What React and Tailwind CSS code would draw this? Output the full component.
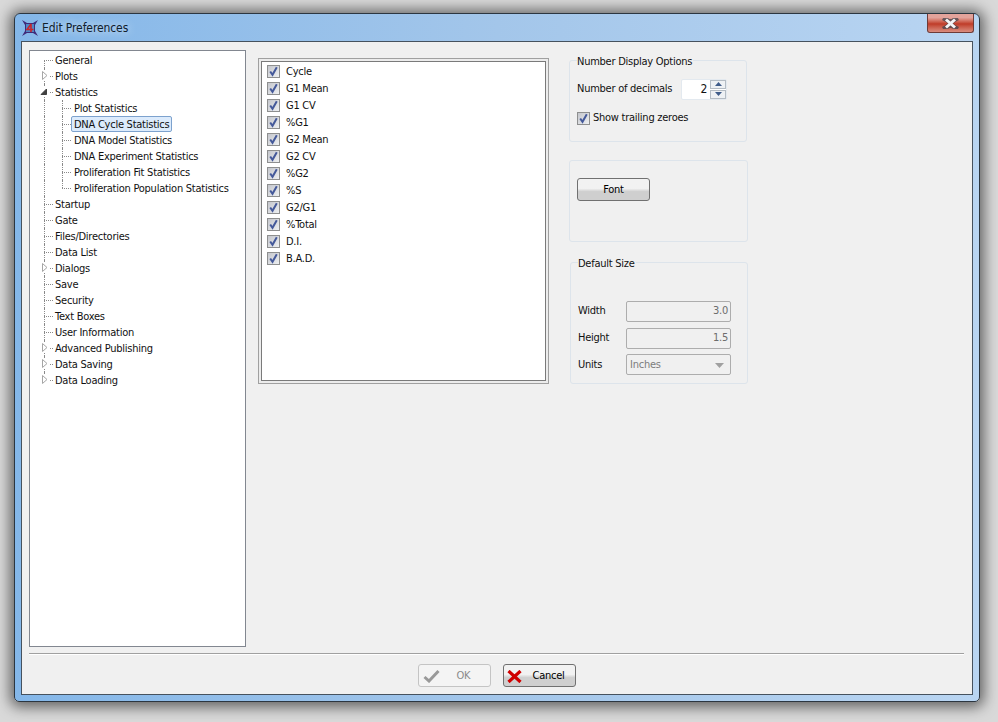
const font = "font-['DejaVu_Sans_Condensed','DejaVu_Sans','Liberation_Sans',sans-serif]"

const treeRows = [
  { label: 'General', first: true },
  { label: 'Plots', arrow: 'closed' },
  { label: 'Statistics', arrow: 'open' },
  { label: 'Plot Statistics', child: true },
  { label: 'DNA Cycle Statistics', child: true, selected: true },
  { label: 'DNA Model Statistics', child: true },
  { label: 'DNA Experiment Statistics', child: true },
  { label: 'Proliferation Fit Statistics', child: true },
  { label: 'Proliferation Population Statistics', child: true, lastChild: true },
  { label: 'Startup' },
  { label: 'Gate' },
  { label: 'Files/Directories' },
  { label: 'Data List' },
  { label: 'Dialogs', arrow: 'closed' },
  { label: 'Save' },
  { label: 'Security' },
  { label: 'Text Boxes' },
  { label: 'User Information' },
  { label: 'Advanced Publishing', arrow: 'closed' },
  { label: 'Data Saving', arrow: 'closed' },
  { label: 'Data Loading', arrow: 'closed', last: true },
]

const statItems = ['Cycle', 'G1 Mean', 'G1 CV', '%G1', 'G2 Mean', 'G2 CV', '%G2', '%S', 'G2/G1', '%Total', 'D.I.', 'B.A.D.']

function Arrow({ type }) {
  return (
    <svg className="absolute left-[-4px] top-[3px] bg-white" width="9" height="9" viewBox="0 0 9 9">
      {type === 'open' ? (
        <path d="M1 7.5 L6.5 7.5 L6.5 2 Z" fill="#404040" stroke="#404040" />
      ) : (
        <path d="M2.5 0.5 L7 4.5 L2.5 8.5 Z" fill="#fff" stroke="#a6a6a6" />
      )}
    </svg>
  )
}

function TreeRow({ row }) {
  const dots = 'border-[#8a8a8a] border-dotted'
  return (
    <div className="flex h-4 items-stretch whitespace-nowrap">
      <div className="relative ml-[14px] w-[9px] shrink-0">
        {!row.arrow && !row.child && (
          <div className={`absolute left-0 top-2 w-[9px] border-t ${dots}`} />
        )}
        {row.arrow && <div className={`absolute left-[6px] top-2 w-[3px] border-t ${dots}`} />}
        <div
          className={`absolute left-0 border-l ${dots} ${row.first ? 'top-2 bottom-0' : row.last ? 'top-0 h-2' : 'inset-y-0'}`}
        />
        {row.arrow && <Arrow type={row.arrow} />}
      </div>
      {row.child && (
        <div className="relative ml-[9px] w-[9px] shrink-0">
          <div className={`absolute left-0 border-l ${dots} ${row.lastChild ? 'top-0 h-2' : 'inset-y-0'}`} />
          <div className={`absolute left-0 top-2 w-[9px] border-t ${dots}`} />
        </div>
      )}
      <span
        className={`flex items-center rounded-[2px] border px-[2px] leading-none ${
          row.selected ? 'border-[#7da2ce] bg-[#dcebfc]' : 'border-transparent'
        } ${row.child ? '' : 'ml-[-1px]'}`}
      >
        {row.label}
      </span>
    </div>
  )
}

function Check() {
  return (
    <span className="flex h-[13px] w-[13px] shrink-0 items-center justify-center border border-[#8e8f8f] bg-gradient-to-br from-[#c4c6cc] to-[#eef0f2]">
      <svg width="11" height="11" viewBox="0 0 11 11">
        <path d="M2.2 5.5 L4.5 8.8 L8.8 1.2" fill="none" stroke="#44599a" strokeWidth="2" />
      </svg>
    </span>
  )
}

function Group({ title, className = '', children }) {
  return (
    <div className={`relative rounded-[3px] border border-[#dde4eb] ${className}`}>
      {title && (
        <span className="absolute left-[7px] top-[-6px] whitespace-nowrap bg-[#f0f0f0] pr-px leading-[14px]">{title}</span>
      )}
      {children}
    </div>
  )
}

function DisabledField({ label, value }) {
  return (
    <div className="flex h-[27px] items-center pt-px">
      <span className="w-12 shrink-0 pt-px">{label}</span>
      <div className="flex h-[21px] w-[105px] items-center justify-end rounded-[2px] border border-[#adadad] px-[2px] pt-px text-[#6d6d6d]">
        {value}
      </div>
    </div>
  )
}

function Button({ disabled, children }) {
  return (
    <button
      className={`flex h-[23px] w-[73px] items-center rounded-[3px] border pt-px ${
        disabled
          ? 'border-[#c4c4c4] bg-[#f4f4f4] text-[#8a8a8a]'
          : 'border-[#707070] bg-gradient-to-b from-[#f2f2f2] from-45% to-[#cfcfcf] to-60% text-black'
      }`}
    >
      {children}
    </button>
  )
}

export default function App() {
  return (
    <div className={`h-[722px] w-[998px] overflow-hidden bg-[#d9d9d9] pl-[14px] pt-[13px] text-[11px] tracking-[-0.25px] text-[#111] ${font}`}>
      {/* window frame */}
      <div className="flex h-[689px] w-[966px] flex-col rounded-t-[6px] rounded-b-[5px] border border-[#2c3640] bg-gradient-to-r from-[#84b7e9] via-[#a3c6ea] to-[#b9d5f2] px-[6px] pb-[6px] shadow-[0_1px_14px_4px_rgba(0,0,0,0.55)]">
        <div className="flex h-[27px] shrink-0 items-center">
          <svg className="ml-px" width="16" height="16" viewBox="0 0 16 16">
            <path d="M0 0 L5 3 L11 3 L16 0 L13 5 L13 11 L16 16 L11 13 L5 13 L0 16 L3 11 L3 5 Z" fill="#3f2a78" />
            <rect x="4" y="4" width="8" height="8" fill="#4c86c6" />
            <path d="M9 4 L5 9.5 L11.5 9.5 M9 4 L9 12" fill="none" stroke="#c8262c" strokeWidth="1.6" />
          </svg>
          <span className="ml-[4px] text-[12px] tracking-[-0.1px] text-[#10202c] [text-shadow:0_0_8px_rgba(255,255,255,0.9)]">Edit Preferences</span>
          <div className="ml-auto mr-[-1px] mt-[-8px] flex h-[19px] w-[47px] items-center justify-center rounded-b-[3px] border border-t-0 border-[#6e3b38] bg-gradient-to-b from-[#e3a39b] from-20% via-[#bf3b28] via-55% to-[#d98d80]">
            <svg width="17" height="11" viewBox="0 0 17 11">
              <path d="M3 1 L8.5 4 L14 1 M3 10 L8.5 7 L14 10 M4 1 L13 10 M13 1 L4 10" fill="none" stroke="#39404a" strokeWidth="4.4" strokeLinecap="square" opacity="0.7" />
              <path d="M4 1.5 L13 9.5 M13 1.5 L4 9.5" fill="none" stroke="#f4f5f7" strokeWidth="3" />
            </svg>
          </div>
        </div>

        {/* client area */}
        <div className="flex min-h-0 flex-1 flex-col border border-[#46525e] bg-[#f0f0f0] px-[7px] pt-2">
          <div className="flex min-h-0 flex-1">
            <div className="h-[597px] w-[217px] shrink-0 border border-[#828790] bg-white pt-px">
              {treeRows.map((row) => (
                <TreeRow key={row.label} row={row} />
              ))}
            </div>

            <div className="ml-3 mt-2 h-[326px] w-[291px] shrink-0 border border-[#a0a0a0] bg-[#ececec] p-[2px]">
              <div className="h-full border border-[#7a7a7a] bg-white pl-[5px] pt-px">
                {statItems.map((item) => (
                  <div key={item} className="flex h-[17px] items-center">
                    <Check />
                    <span className="ml-[6px] pt-px">{item}</span>
                  </div>
                ))}
              </div>
            </div>

            <div className="ml-5 flex w-[179px] shrink-0 flex-col pt-[10px]">
              <Group title="Number Display Options" className="h-[82px] w-[178px]">
                <div className="ml-[7px] mt-[17px] flex h-[22px] items-center">
                  <span className="w-[104px] whitespace-nowrap">Number of decimals</span>
                  <div className="flex h-[21px] w-[46px] items-center rounded-[2px] border border-[#e3e9ef] bg-white">
                    <span className="flex-1 pr-[3px] text-right text-[12px]">2</span>
                    <div className="flex w-[16px] flex-col gap-px">
                      <span className="flex h-[9px] items-center justify-center border border-[#b4bcc4] bg-[#eef1f4] text-[#3f5c8a]">
                        <svg width="7" height="4" viewBox="0 0 7 4"><path d="M3.5 0 L7 4 L0 4 Z" fill="currentColor" /></svg>
                      </span>
                      <span className="flex h-[9px] items-center justify-center border border-[#b4bcc4] bg-[#eef1f4] text-[#3f5c8a]">
                        <svg width="7" height="4" viewBox="0 0 7 4"><path d="M0 0 L7 0 L3.5 4 Z" fill="currentColor" /></svg>
                      </span>
                    </div>
                  </div>
                </div>
                <div className="ml-[7px] mt-[10px] flex h-[16px] items-center">
                  <Check />
                  <span className="ml-[3px] whitespace-nowrap pt-px">Show trailing zeroes</span>
                </div>
              </Group>

              <Group className="mt-[18px] h-[82px] w-[179px]">
                <div className="ml-[7px] mt-[17px]">
                  <Button>
                    <span className="w-full text-center">Font</span>
                  </Button>
                </div>
              </Group>

              <Group title="Default Size" className="ml-px mt-5 h-[122px] w-[178px]">
                <div className="ml-[7px] mt-[34px]">
                  <DisabledField label="Width" value="3.0" />
                  <DisabledField label="Height" value="1.5" />
                  <div className="flex h-[27px] items-center">
                    <span className="w-12 shrink-0 pt-px">Units</span>
                    <div className="flex h-[21px] w-[105px] items-center justify-between rounded-[2px] border border-[#adadad] pl-[3px] pr-[6px] pt-px text-[#7d7d7d]">
                      Inches
                      <svg width="9" height="5" viewBox="0 0 9 5"><path d="M0 0 L9 0 L4.5 5 Z" fill="#a0a0a0" /></svg>
                    </div>
                  </div>
                </div>
              </Group>
            </div>
          </div>

          {/* footer */}
          <div className="mr-px h-[2px] shrink-0 border-t border-b border-t-[#a0a0a0] border-b-white" />
          <div className="flex h-[39px] shrink-0 items-start justify-center gap-3 pr-px pt-[9px]">
            <Button disabled>
              <svg className="ml-[4px]" width="17" height="14" viewBox="0 0 17 14">
                <path d="M1.5 8 L6 12 L15.5 2" fill="none" stroke="#999" strokeWidth="3" />
              </svg>
              <span className="ml-[17px]">OK</span>
            </Button>
            <Button>
              <svg className="ml-[3px]" width="15" height="13" viewBox="0 0 15 13">
                <path d="M1.5 1 L13.5 12 M13.5 1 L1.5 12" fill="none" stroke="#d00000" strokeWidth="3.2" />
              </svg>
              <span className="ml-[11px]">Cancel</span>
            </Button>
          </div>
        </div>
      </div>
    </div>
  )
}
